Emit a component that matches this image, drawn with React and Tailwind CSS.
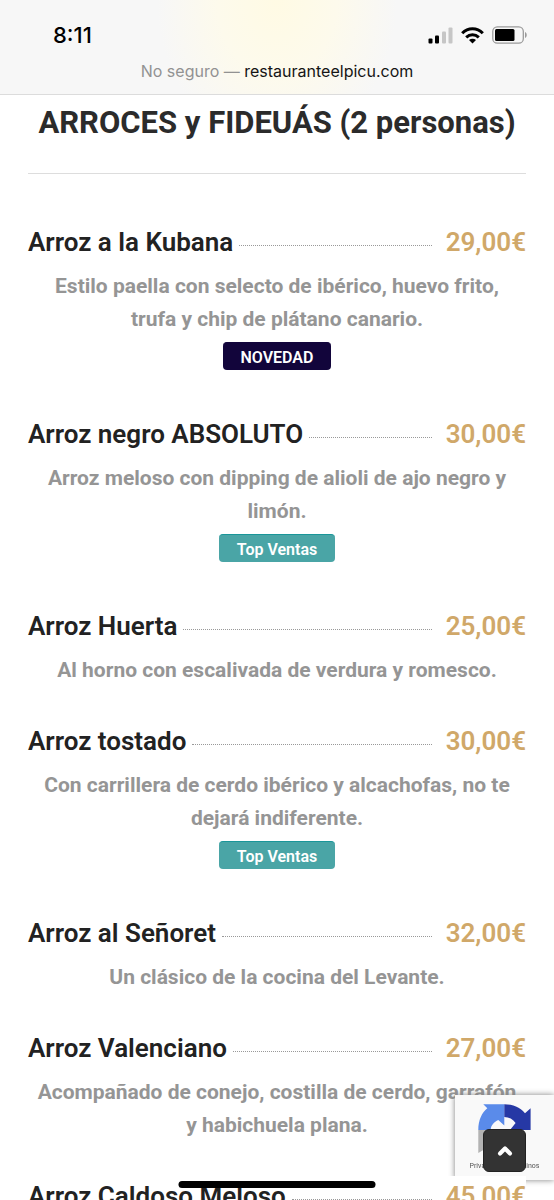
import { ChevronUp } from 'lucide-react';

const dishes = [
  { name: 'Arroz a la Kubana', price: '29,00€', description: 'Estilo paella con selecto de ibérico, huevo frito, trufa y chip de plátano canario.', badge: 'new' },
  { name: 'Arroz negro ABSOLUTO', price: '30,00€', description: 'Arroz meloso con dipping de alioli de ajo negro y limón.', badge: 'top' },
  { name: 'Arroz Huerta', price: '25,00€', description: 'Al horno con escalivada de verdura y romesco.' },
  { name: 'Arroz tostado', price: '30,00€', description: 'Con carrillera de cerdo ibérico y alcachofas, no te dejará indiferente.', badge: 'top' },
  { name: 'Arroz al Señoret', price: '32,00€', description: 'Un clásico de la cocina del Levante.' },
  { name: 'Arroz Valenciano', price: '27,00€', description: 'Acompañado de conejo, costilla de cerdo, garrafón y habichuela plana.' },
  { name: 'Arroz Caldoso Meloso', price: '45,00€' },
];

const badges = {
  new: { label: 'NOVEDAD', className: 'border-[#12053b] bg-[#12053b]' },
  top: { label: 'Top Ventas', className: 'border-[#1a9699] bg-[#4aa5a6]' },
};

const StatusIcons = () => (
  <div className="flex items-center gap-2">
    <svg width="25" height="17" viewBox="0 0 25 17" aria-hidden="true">
      <rect x="0.500" y="11.500" width="4" height="5" rx="1" fill="#000" />
      <rect x="7" y="8.500" width="4" height="8" rx="1" fill="#000" />
      <rect x="14" y="4.500" width="4" height="12" rx="1" fill="#c6c6c6" />
      <rect x="20.500" y=".5" width="4" height="16" rx="1" fill="#c6c6c6" />
    </svg>
    <svg width="23" height="17" viewBox="0 0 23 17" fill="none" stroke="#000" strokeWidth="3" aria-hidden="true">
      <path d="M1.200 6.200C7 .2 16 .2 21.800 6.200" />
      <path d="M5.200 10.300C8.900 6.800 14.100 6.800 17.800 10.300" />
      <path d="M11.500 16.500 8 13c2-1.700 5-1.700 7 0z" fill="#000" stroke="none" />
    </svg>
    <svg width="36" height="18" viewBox="0 0 36 18" aria-hidden="true">
      <rect x=".8" y=".8" width="30.500" height="16.400" rx="4.500" fill="none" stroke="#9b9b9b" strokeWidth="1.300" />
      <rect x="3" y="3" width="19.500" height="12" rx="1.500" fill="#000" />
      <path d="M33 6c2.300 1 2.300 5 0 6z" fill="#9b9b9b" />
    </svg>
  </div>
);

const BrowserHeader = () => (
  <header className="border-b border-[#dcdcdc] bg-[#f7f7f7] bg-[radial-gradient(ellipse_120px_150px_at_50%_0%,#fffae4_0%,#fdfaec_50%,#f7f7f7_100%)] font-['Inter',sans-serif]">
    <div className="flex h-14 items-end justify-between pr-[26px] pl-[53px]">
      <time className="h-[33px] text-[22px] leading-6 font-medium text-black">8:11</time>
      <div className="pb-3">
        <StatusIcons />
      </div>
    </div>
    <p className="h-[38px] pt-[3px] text-center text-base leading-6 text-[#929292]">
      No seguro — <span className="text-[#151515]">restauranteelpicu.com</span>
    </p>
  </header>
);

const Dish = ({ dish }) => {
  const badge = badges[dish.badge];

  return (
    <li>
      <div className="relative z-20 flex h-10 items-center bg-white">
        <h2 className="text-[26px] leading-10 font-semibold text-[#222]">{dish.name}</h2>
        <span className="mt-[6px] mr-[14px] ml-[6px] flex-1 border-b border-dotted border-[#999]" />
        <span className="text-[26px] leading-10 font-semibold text-[#d0a869]">{dish.price}</span>
      </div>
      {dish.description && (
        <p className="mt-2 px-1 text-center text-[21px] leading-[33px] font-bold text-[#959595]">{dish.description}</p>
      )}
      {badge && (
        <div className="mt-[6px] mb-[10px] flex justify-center">
          <span className={`h-7 rounded-sm border-t px-[18px] text-base leading-[29px] font-semibold text-white ${badge.className}`}>{badge.label}</span>
        </div>
      )}
    </li>
  );
};

const RecaptchaBadge = () => (
  <aside className="fixed right-0 bottom-5 z-10 h-[85px] w-[99px] overflow-hidden bg-[#f9f9f9] shadow-[0_0_6px_#808080]">
    <svg className="mt-2 ml-[23px]" width="54" height="54" viewBox="0 0 54 54" aria-hidden="true">
      <path d="M.300 27C.300 17 4 9.500 9.300 5.300L5.300 1.300h21v21.300L20.300 17C16 19 13 22 12.700 27z" fill="#5a8bea" />
      <path d="M26.300 1.300C35 1.300 42 4 47 10.300l5.600-5V27H32l5.600-7C35 16 31 14 26.300 14z" fill="#2638a5" />
      <path d="M.300 27h12.400c0 5 2 9 6 12L.300 50z" fill="#b3b3b3" />
    </svg>
    <div className="absolute inset-x-0 bottom-2 flex justify-center gap-[3px] font-['Roboto',sans-serif] text-[7px] leading-3 text-[#555]">
      <a href="#privacidad">Privacidad</a>-<a href="#terminos">Términos</a>
    </div>
  </aside>
);

const App = () => (
  <div className="h-screen overflow-hidden bg-white font-['Roboto',sans-serif]">
    <BrowserHeader />
    <main className="px-7">
      <h1 className="border-b border-[#ddd] pt-2 pb-[30px] text-center text-[31px] leading-10 font-bold whitespace-nowrap text-[#2b2b2b]">
        ARROCES y FIDEUÁS (2 personas)
      </h1>
      <ul className="flex flex-col gap-[34px] pt-12">
        {dishes.map((dish) => (
          <Dish key={dish.name} dish={dish} />
        ))}
      </ul>
    </main>
    <RecaptchaBadge />
    <button type="button" aria-label="Volver arriba" className="fixed right-7 bottom-7 z-30 flex size-[43px] items-center justify-center rounded-md border border-[#222] bg-[#333] text-white">
      <ChevronUp className="size-5" strokeWidth={5} />
    </button>
    <div className="fixed bottom-3 left-1/2 z-40 h-[7px] w-[197px] -translate-x-1/2 rounded-full bg-black" />
  </div>
);

export default App;
